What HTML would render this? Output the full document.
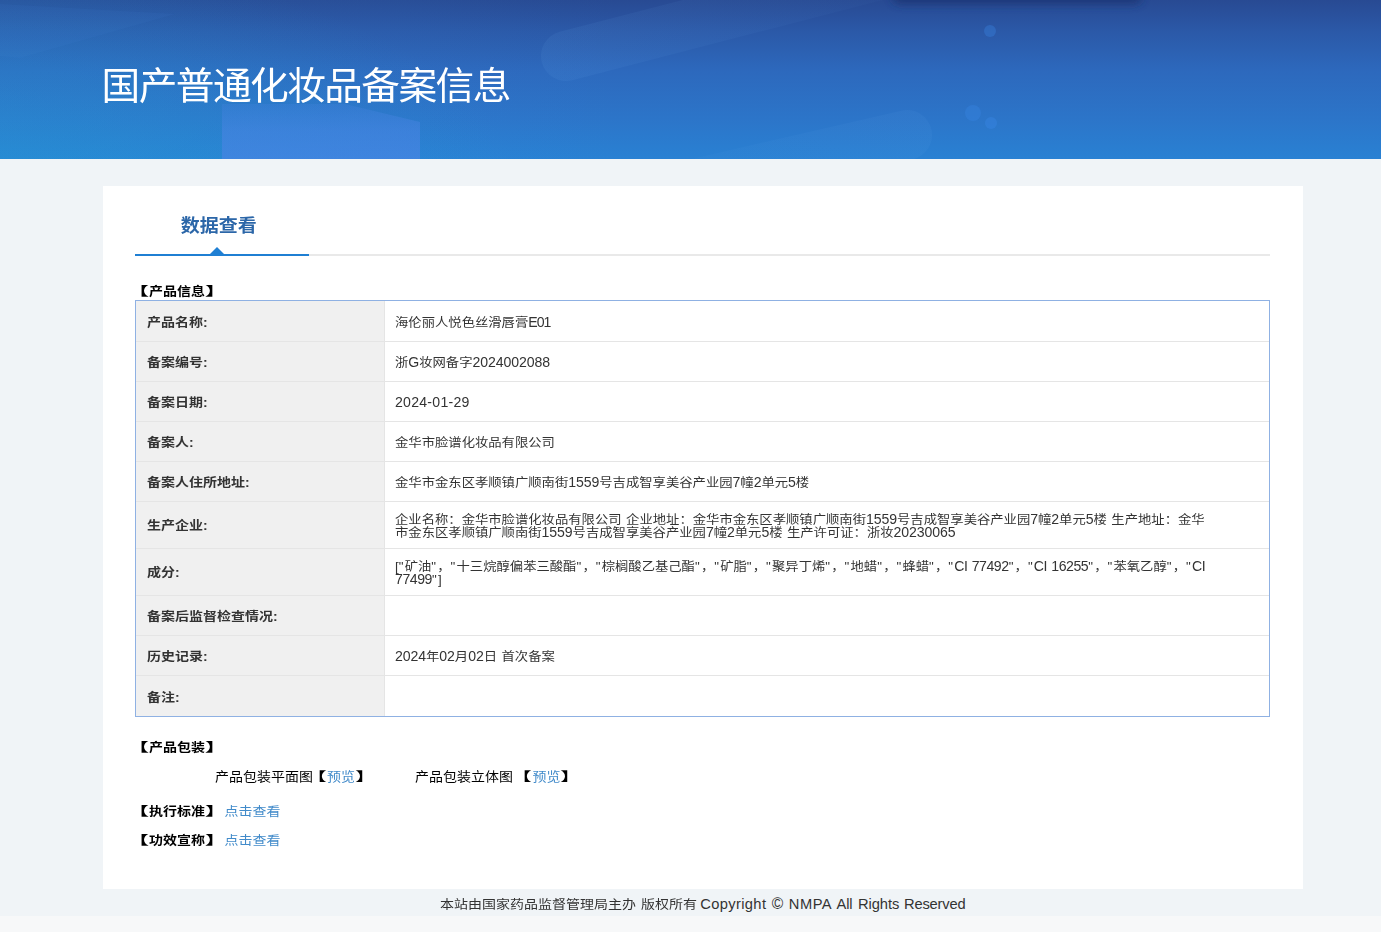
<!DOCTYPE html>
<html lang="zh-CN">
<head>
<meta charset="utf-8">
<title>国产普通化妆品备案信息</title>
<style>
*{box-sizing:border-box;margin:0;padding:0}
html,body{width:1381px;height:932px;overflow:hidden}
body{position:relative;background:#f0f4f7;font-family:"Liberation Sans","Noto Sans CJK SC",sans-serif;color:#333;font-size:14px}
.abs{position:absolute;white-space:nowrap}
#hdr{left:0;top:0;width:1381px;height:159px;overflow:hidden;background:#2c68bc}
#hdr svg{position:absolute;left:0;top:0;display:block}
#title{left:101.6px;top:57.5px;font-size:38.7px;letter-spacing:-1.58px;line-height:56px;color:#fff;font-weight:400;transform:scaleY(.97);transform-origin:0 46px}
#panel{left:103px;top:186px;width:1200px;height:703px;background:#fff}
#tab{left:180.8px;top:212.3px;font-size:19px;letter-spacing:0;line-height:28px;font-weight:700;color:#2b66a8;transform:scaleY(.93)}
#gline{left:135px;top:254px;width:1135px;height:2px;background:#e9e9e9}
#bline{left:135px;top:254px;width:174px;height:2px;background:#1f7fd3}
#tri{left:210px;top:247px;width:0;height:0;border-left:7px solid transparent;border-right:7px solid transparent;border-bottom:7px solid #1f7fd3}
.sec{font-weight:700;color:#000;font-size:14px;line-height:20px;transform:scaleY(.88)}
.pk{line-height:20px;color:#000;transform:scaleY(.9)}
a{color:#428bca;text-decoration:none}
.bl,.br{display:inline-block;font-weight:inherit;transform:scaleX(1.55)}
.bl{transform-origin:100% 50%}
.br{transform-origin:0 50%}
#tbl{left:135px;top:300px;width:1135px;height:417px;border:1px solid #8fb1e3;background:#fff}
.r{position:absolute;left:0;width:1133px;border-bottom:1px solid #e5e5e5}
.r:last-child{border-bottom:0}
.l{position:absolute;left:0;top:0;bottom:0;width:249px;background:#f0f0f0;border-right:1px solid #e5e5e5;font-weight:700;font-size:14px;padding-left:11px;color:#333;display:flex;align-items:center;white-space:nowrap}
.v{position:absolute;left:249px;top:0;bottom:0;right:0;font-size:13.33px;line-height:14.4px;padding-left:10px;color:#333;display:flex;align-items:center;white-space:nowrap;word-spacing:.8px}
.l>span{display:block;position:relative;top:.5px;transform:scaleY(.87)}
.v>span{display:block;position:relative;top:1.5px;transform:scaleY(.9);transform-origin:50% 50%}
.n{display:inline-block;position:relative;top:0;font-size:14.1px;letter-spacing:-.09px;transform:scaleY(1.111);transform-origin:50% 78%;line-height:13.33px}
.n0{letter-spacing:-.45px}
.q{display:inline-block;width:5.95px}
#foot{left:0;top:894px;width:1381px;height:20px;font-size:14px;line-height:20px;color:#333}
#foot span{position:absolute;top:0}
#foot .c{transform:scaleY(.88);top:.5px}
#foot .e{font-size:14.7px}
#strip{left:0;top:916px;width:1381px;height:16px;background:#f7f8f9}
</style>
</head>
<body>
<div id="hdr" class="abs">
<svg width="1381" height="159" viewBox="0 0 1381 159">
<defs>
<linearGradient id="gv" x1="0" y1="0" x2="0" y2="1">
<stop offset="0" stop-color="#284a93"/><stop offset="0.2" stop-color="#2b59a8"/><stop offset="0.45" stop-color="#2d69bd"/><stop offset="0.75" stop-color="#2c75c9"/><stop offset="1" stop-color="#2981d3"/>
</linearGradient>
<radialGradient id="gl" gradientUnits="userSpaceOnUse" cx="-40" cy="190" r="560" gradientTransform="translate(-40 190) scale(1 .42) translate(40 -190)">
<stop offset="0" stop-color="#1f9cd0" stop-opacity="0.40"/><stop offset="0.5" stop-color="#1f9cd0" stop-opacity="0.2"/><stop offset="1" stop-color="#1fa0d8" stop-opacity="0"/>
</radialGradient>
<linearGradient id="gl2" x1="0" y1="0" x2="1" y2="0">
<stop offset="0" stop-color="#3c9cf0" stop-opacity="0.10"/><stop offset="0.3" stop-color="#3c9cf0" stop-opacity="0.05"/><stop offset="0.45" stop-color="#3c9cf0" stop-opacity="0"/>
</linearGradient>
<linearGradient id="gb" x1="0" y1="0" x2="0" y2="1">
<stop offset="0" stop-color="#4a84e4" stop-opacity="0.22"/><stop offset="0.5" stop-color="#4a84e4" stop-opacity="0.55"/><stop offset="1" stop-color="#4a84e4" stop-opacity="0.66"/>
</linearGradient>
<linearGradient id="gp1" x1="0" y1="0" x2="1" y2="0">
<stop offset="0" stop-color="#6fb0f0" stop-opacity="0.085"/><stop offset="0.6" stop-color="#6fb0f0" stop-opacity="0.04"/><stop offset="1" stop-color="#6fb0f0" stop-opacity="0"/>
</linearGradient>
<linearGradient id="gp2" x1="1" y1="0" x2="0" y2="0">
<stop offset="0" stop-color="#6fb0f0" stop-opacity="0.07"/><stop offset="1" stop-color="#6fb0f0" stop-opacity="0.02"/>
</linearGradient>
<filter id="bl" x="-20%" y="-300%" width="140%" height="700%"><feGaussianBlur stdDeviation="4"/></filter>
</defs>
<rect width="1381" height="159" fill="url(#gv)"/>
<rect width="1381" height="159" fill="url(#gl2)"/>
<rect width="1381" height="159" fill="url(#gl)"/>
<polygon points="0,4 175,14 20,58 0,56" fill="#5aa0e8" opacity="0.06"/>
<polygon points="222,104 345,104 420,122 420,159 222,159" fill="url(#gb)"/>
<rect x="892" y="-12" width="250" height="16" rx="8" fill="#1d3673" opacity="0.85" filter="url(#bl)"/>
<g transform="rotate(-14.5 566 56)"><rect x="541" y="31" width="460" height="50" rx="25" fill="url(#gp1)"/></g>
<g transform="rotate(-13 907 135)"><rect x="532" y="110" width="400" height="50" rx="25" fill="url(#gp2)"/></g>
<circle cx="990" cy="31" r="6" fill="#3a86e6" opacity="0.35"/>
<circle cx="973" cy="113" r="8" fill="#3a86e6" opacity="0.35"/>
<circle cx="991" cy="123" r="6" fill="#3a86e6" opacity="0.4"/>
</svg>
</div>
<div id="title" class="abs">国产普通化妆品备案信息</div>
<div id="panel" class="abs"></div>
<div id="tab" class="abs">数据查看</div>
<div id="gline" class="abs"></div>
<div id="bline" class="abs"></div>
<div id="tri" class="abs"></div>
<div class="abs sec" style="left:135px;top:282px"><b class="bl">【</b>产品信息<b class="br">】</b></div>
<div id="tbl" class="abs">
<div class="r" style="top:0px;height:41px"><div class="l"><span>产品名称:</span></div><div class="v"><span style="top:2.3px">海伦丽人悦色丝滑唇膏<span class="n" style="letter-spacing:-1px">E01</span></span></div></div>
<div class="r" style="top:41px;height:40px"><div class="l"><span>备案编号:</span></div><div class="v"><span>浙<span class="n">G</span>妆网备字<span class="n">2024002088</span></span></div></div>
<div class="r" style="top:81px;height:40px"><div class="l"><span>备案日期:</span></div><div class="v"><span><span class="n" style="letter-spacing:.25px">2024-01-29</span></span></div></div>
<div class="r" style="top:121px;height:40px"><div class="l"><span>备案人:</span></div><div class="v"><span>金华市脸谱化妆品有限公司</span></div></div>
<div class="r" style="top:161px;height:40px"><div class="l"><span>备案人住所地址:</span></div><div class="v"><span>金华市金东区孝顺镇广顺南街<span class="n">1559</span>号吉成智享美谷产业园<span class="n">7</span>幢<span class="n">2</span>单元<span class="n">5</span>楼</span></div></div>
<div class="r" style="top:201px;height:47px"><div class="l"><span style="top:-.25px">生产企业:</span></div><div class="v"><span style="top:2.5px">企业名称：金华市脸谱化妆品有限公司 企业地址：金华市金东区孝顺镇广顺南街<span class="n">1559</span>号吉成智享美谷产业园<span class="n">7</span>幢<span class="n">2</span>单元<span class="n">5</span>楼 生产地址：金华<br>市金东区孝顺镇广顺南街<span class="n">1559</span>号吉成智享美谷产业园<span class="n">7</span>幢<span class="n">2</span>单元<span class="n">5</span>楼 生产许可证：浙妆<span class="n">20230065</span></span></div></div>
<div class="r" style="top:248px;height:47px"><div class="l"><span style="top:-.25px">成分:</span></div><div class="v"><span style="top:2.5px">[<span class="q">"</span>矿油<span class="q">"</span>，<span class="q">"</span>十三烷醇偏苯三酸酯<span class="q">"</span>，<span class="q">"</span>棕榈酸乙基己酯<span class="q">"</span>，<span class="q">"</span>矿脂<span class="q">"</span>，<span class="q">"</span>聚异丁烯<span class="q">"</span>，<span class="q">"</span>地蜡<span class="q">"</span>，<span class="q">"</span>蜂蜡<span class="q">"</span>，<span class="q">"</span><span class="n n0">CI 77492</span><span class="q">"</span>，<span class="q">"</span><span class="n n0">CI 16255</span><span class="q">"</span>，<span class="q">"</span>苯氧乙醇<span class="q">"</span>，<span class="q">"</span><span class="n n0">CI</span><br><span class="n n0">77499</span><span class="q">"</span>]</span></div></div>
<div class="r" style="top:295px;height:40px"><div class="l"><span>备案后监督检查情况:</span></div><div class="v"></div></div>
<div class="r" style="top:335px;height:40px"><div class="l"><span>历史记录:</span></div><div class="v"><span><span class="n">2024</span>年<span class="n">02</span>月<span class="n">02</span>日 首次备案</span></div></div>
<div class="r" style="top:375px;height:40px"><div class="l"><span>备注:</span></div><div class="v"></div></div>
</div>
<div class="abs sec" style="left:135px;top:738px"><b class="bl">【</b>产品包装<b class="br">】</b></div>
<div class="abs pk" style="left:215px;top:766px">产品包装平面图<b class="bl">【</b><a>预览</a><b class="br">】</b></div>
<div class="abs pk" style="left:415px;top:766px">产品包装立体图 <b class="bl" style="margin-left:1.5px">【</b><a>预览</a><b class="br">】</b></div>
<div class="abs sec" style="left:135px;top:801.5px"><b class="bl">【</b>执行标准<b class="br">】</b> <a style="font-weight:400;margin-left:1.5px">点击查看</a></div>
<div class="abs sec" style="left:135px;top:830.5px"><b class="bl">【</b>功效宣称<b class="br">】</b> <a style="font-weight:400;margin-left:1.5px">点击查看</a></div>
<div id="foot" class="abs"><span class="c" style="left:440px">本站由国家药品监督管理局主办</span> <span class="c" style="left:641px">版权所有</span> <span class="e" style="left:700.3px;letter-spacing:.35px">Copyright</span> <span class="e" style="left:771.8px;font-size:15.6px">©</span> <span class="e" style="left:788.8px;letter-spacing:.5px">NMPA</span> <span class="e" style="left:836.5px;letter-spacing:-.1px">All</span> <span class="e" style="left:858px;letter-spacing:-.08px">Rights</span> <span class="e" style="left:904.1px;letter-spacing:-.2px">Reserved</span></div>
<div id="strip" class="abs"></div>
</body>
</html>
